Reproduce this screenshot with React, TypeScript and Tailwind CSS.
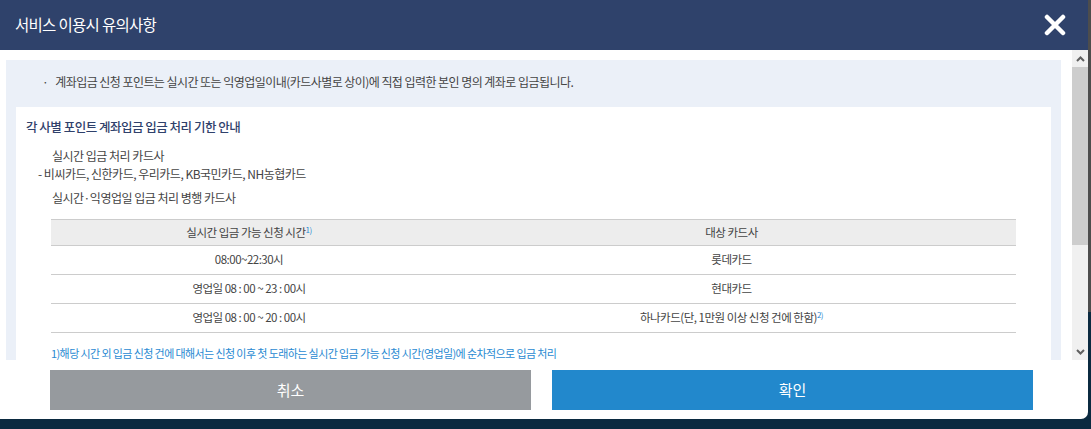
import React from "react";

const font = { fontFamily: '"Noto Sans CJK KR", "Noto Sans", sans-serif' };

const rows = [
  { time: "08:00~22:30시", card: "롯데카드", note: false },
  { time: "영업일 08 : 00 ~ 23 : 00시", card: "현대카드", note: false },
  { time: "영업일 08 : 00 ~ 20 : 00시", card: "하나카드(단, 1만원 이상 신청 건에 한함)", note: true },
];

function CloseIcon() {
  return (
    <svg width="22" height="22" viewBox="0 0 22 22">
      <path d="M3 3 L19 19 M19 3 L3 19" stroke="#fff" strokeWidth="4.5" strokeLinecap="round" />
    </svg>
  );
}

function FakeScrollbar() {
  return (
    <div className="w-[16px] h-[310px] bg-[#f0f0f0] flex flex-col">
      {/* up arrow */}
      <div className="h-[17px] flex items-center justify-center">
        <svg width="9" height="6" viewBox="0 0 9 6">
          <path d="M1 5 L4.5 1.5 L8 5" stroke="#606060" strokeWidth="2" fill="none" />
        </svg>
      </div>
      <div className="h-[178px] bg-[#cdcdcd]" />
      <div className="flex-1" />
      <div className="h-[17px] flex items-center justify-center">
        <svg width="9" height="6" viewBox="0 0 9 6">
          <path d="M1 1 L4.5 4.5 L8 1" stroke="#606060" strokeWidth="2" fill="none" />
        </svg>
      </div>
    </div>
  );
}

export default function App() {
  return (
    <div className="w-[1091px] h-[429px] overflow-hidden flex bg-[#0b2a40]" style={font}>
      <div className="w-[1088px] h-[419px] bg-white rounded-br-[7px] flex flex-col overflow-hidden">
        {/* Header */}
        <div className="h-[50px] bg-[#2f426b] flex items-center justify-between pl-[15px] pr-[22px]">
          <h1 className="text-white text-[15.5px] leading-none tracking-[-0.7px]">서비스 이용시 유의사항</h1>
          <CloseIcon />
        </div>

        {/* Body */}
        <div className="flex h-[310px]">
          <div className="w-[1072px] pl-[6px] pr-[11px] pt-[10px] overflow-hidden">
            <div className="bg-[#ebf0f8] h-[300px] px-[10px] overflow-hidden">
              <p className="pt-[13px] pl-[26px] text-[12px] text-[#444] tracking-[-0.55px] leading-[18px]">
                <span className="mr-[7px]">·</span>계좌입금 신청 포인트는 실시간 또는 익영업일이내(카드사별로 상이)에 직접 입력한 본인 명의 계좌로 입금됩니다.
              </p>
              <div className="bg-white mt-[16px] pl-[10px] pr-[35px] pt-[11px] pb-[20px]">
                <h2 className="text-[12.5px] text-[#2f416b] font-medium tracking-[-0.5px] leading-[18px]">
                  각 사별 포인트 계좌입금 입금 처리 기한 안내
                </h2>
                <div className="text-[12px] text-[#444] tracking-[-0.5px] leading-[18px]">
                  <p className="mt-[11px] pl-[26px]">실시간 입금 처리 카드사</p>
                  <p className="pl-[12px]">- 비씨카드, 신한카드, 우리카드, KB국민카드, NH농협카드</p>
                  <p className="mt-[6px] pl-[26px]">실시간·익영업일 입금 처리 병행 카드사</p>
                </div>
                <table className="ml-[25px] mt-[12px] w-[965px] border-collapse text-[11.5px] text-[#444] tracking-[-0.5px]">
                  <thead>
                    <tr className="bg-[#ededed] border-t border-b border-[#cccccc] h-[26px]">
                      <th className="w-[396px] font-normal">
                        실시간 입금 가능 신청 시간<sup className="text-[#2a8ad2] text-[8px]">1)</sup>
                      </th>
                      <th className="font-normal">대상 카드사</th>
                    </tr>
                  </thead>
                  <tbody>
                    {rows.map((r, i) => (
                      <tr key={i} className="border-b border-[#cccccc] h-[29px]">
                        <td className="text-center">{r.time}</td>
                        <td className="text-center">
                          {r.card}
                          {r.note && <sup className="text-[#2a8ad2] text-[8px]">2)</sup>}
                        </td>
                      </tr>
                    ))}
                  </tbody>
                </table>
                <p className="ml-[25px] mt-[12px] text-[11px] text-[#2a8ad2] tracking-[-0.6px] leading-[16px]">
                  1)해당 시간 외 입금 신청 건에 대해서는 신청 이후 첫 도래하는 실시간 입금 가능 신청 시간(영업일)에 순차적으로 입금 처리
                </p>
              </div>
            </div>
          </div>
          <FakeScrollbar />
        </div>

        {/* Footer */}
        <div className="flex gap-[21px] pl-[50px] pt-[10px]">
          <button className="w-[481px] h-[40px] bg-[#969a9e] text-white text-[15px]">취소</button>
          <button className="w-[481px] h-[40px] bg-[#2288cc] text-white text-[15px]">확인</button>
        </div>
      </div>
      <div className="flex-1 h-[312px] bg-[#4d4d4d]" />
    </div>
  );
}
